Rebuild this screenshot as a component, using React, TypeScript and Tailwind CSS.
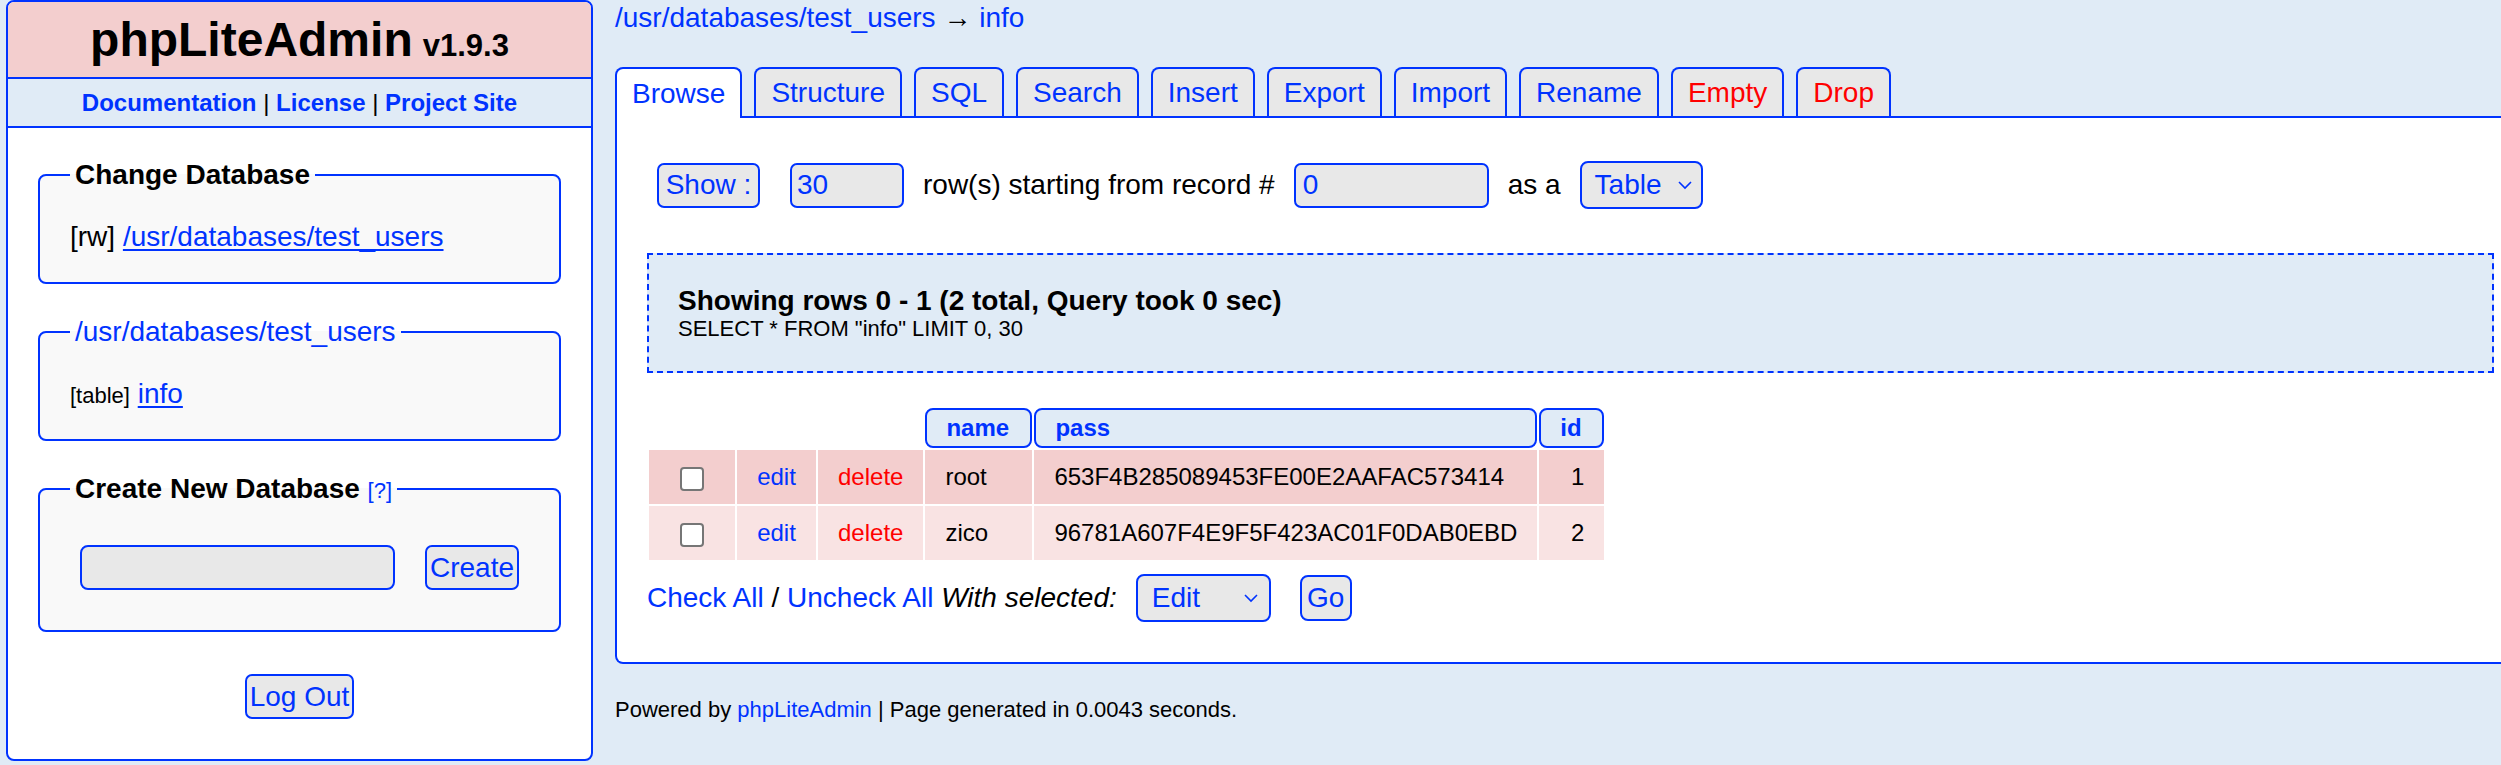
function Chevron() {
  return (
    <svg width="16" height="10" viewBox="0 0 16 10" fill="none">
      <polyline points="2,2 8,8 14,2" stroke="#0033ff" strokeWidth="1.6" />
    </svg>
  );
}

function Sidebar() {
  return (
    <aside className="ml-[6px] w-[587px] shrink-0 overflow-hidden rounded-[8px] border-2 border-[#0033ff] bg-white">
      <div className="h-[77px] border-b-2 border-[#0033ff] bg-[#f3cece] text-center font-bold leading-[75px]">
        <span className="text-[48px]">phpLiteAdmin</span>
        <span className="ml-[10px] text-[31px]">v1.9.3</span>
      </div>
      <div className="h-[49px] border-b-2 border-[#0033ff] bg-[#e0ebf6] text-center text-[24px] font-bold leading-[47px]">
        <span className="text-[#0033ff]">Documentation</span>
        <span className="font-normal"> | </span>
        <span className="text-[#0033ff]">License</span>
        <span className="font-normal"> | </span>
        <span className="text-[#0033ff]">Project Site</span>
      </div>

      <div className="px-[30px] pb-[40px] pt-[31px] text-[28px] leading-[32px]">
        <div className="flex flex-col gap-[32px]">
          <fieldset className="rounded-[8px] border-2 border-[#0033ff] bg-[#f9f9f9] px-[30px] pb-[29px] pt-[30px]">
            <legend className="px-[5px] font-bold">Change Database</legend>
            <div>
              [rw] <span className="text-[#0033ff] underline underline-offset-[3px]">/usr/databases/test_users</span>
            </div>
          </fieldset>

          <fieldset className="rounded-[8px] border-2 border-[#0033ff] bg-[#f9f9f9] px-[30px] pb-[29px] pt-[30px]">
            <legend className="px-[5px] text-[#0033ff]">/usr/databases/test_users</legend>
            <div>
              <span className="text-[22px] leading-none">[table]</span>{' '}
              <span className="text-[#0033ff] underline underline-offset-[3px]">info</span>
            </div>
          </fieldset>

          <fieldset className="rounded-[8px] border-2 border-[#0033ff] bg-[#f9f9f9] px-[30px] pb-[40px] pt-[40px]">
            <legend className="px-[5px]">
              <span className="font-bold">Create New Database</span>{' '}
              <span className="text-[22px] leading-none text-[#0033ff]">[?]</span>
            </legend>
            <div className="flex items-center">
              <div className="ml-[10px] h-[45px] w-[315px] rounded-[8px] border-2 border-[#0033ff] bg-[#e8e8e8]" />
              <button className="ml-[30px] flex h-[45px] w-[94px] items-center justify-center rounded-[7px] border-2 border-[#0033ff] bg-[#e8e8e8] text-[#0033ff]">
                Create
              </button>
            </div>
          </fieldset>
        </div>

        <div className="mt-[42px] flex justify-center">
          <button className="flex h-[45px] w-[109px] items-center justify-center rounded-[7px] border-2 border-[#0033ff] bg-[#e8e8e8] text-[#0033ff]">
            Log Out
          </button>
        </div>
      </div>
    </aside>
  );
}

export default function App() {
  const tabs = [
    { label: 'Structure', red: false },
    { label: 'SQL', red: false },
    { label: 'Search', red: false },
    { label: 'Insert', red: false },
    { label: 'Export', red: false },
    { label: 'Import', red: false },
    { label: 'Rename', red: false },
    { label: 'Empty', red: true },
    { label: 'Drop', red: true },
  ];

  const rows = [
    { name: 'root', pass: '653F4B285089453FE00E2AAFAC573414', id: 1, bg: 'bg-[#f3cece]' },
    { name: 'zico', pass: '96781A607F4E9F5F423AC01F0DAB0EBD', id: 2, bg: 'bg-[#f9e3e3]' },
  ];

  return (
    <div className="h-[765px] w-full overflow-hidden bg-[#e0ebf6] font-['Liberation_Sans',Arial,sans-serif] text-black">
      <div className="flex items-start">
        <Sidebar />

        <main className="ml-[22px] w-[1911px] shrink-0">
          <div className="pt-[2px] text-[28px] leading-[32px]">
            <span className="text-[#0033ff]">/usr/databases/test_users</span> →{' '}
            <span className="text-[#0033ff]">info</span>
          </div>

          {/* tab strip */}
          <div className="mt-[33px] flex items-end text-[28px]">
            <div className="flex h-[51px] items-center rounded-t-[8px] border-2 border-b-0 border-[#0033ff] bg-white px-[15px] text-[#0033ff]">
              Browse
            </div>
            <div className="flex flex-1 gap-[12px] border-b-2 border-[#0033ff] pl-[12px]">
              {tabs.map((t) => (
                <div
                  key={t.label}
                  className={
                    'flex h-[49px] items-center rounded-t-[8px] border-2 border-b-0 border-[#0033ff] bg-[#e8e8e8] px-[15px] ' +
                    (t.red ? 'text-[#ff0000]' : 'text-[#0033ff]')
                  }
                >
                  {t.label}
                </div>
              ))}
            </div>
          </div>

          <div className="rounded-bl-[8px] border-2 border-t-0 border-[#0033ff] bg-white px-[30px] pb-[40px] pt-[43px]">
            <div className="flex h-[48px] items-center text-[28px]">
              <button className="ml-[10px] flex h-[45px] w-[103px] items-center justify-center rounded-[7px] border-2 border-[#0033ff] bg-[#e8e8e8] text-[#0033ff]">
                Show :
              </button>
              <div className="ml-[30px] flex h-[45px] w-[114px] items-center rounded-[7px] border-2 border-[#0033ff] bg-[#e8e8e8] pl-[5px] text-[#0033ff]">
                30
              </div>
              <span className="ml-[19px]">row(s) starting from record #</span>
              <div className="ml-[19px] flex h-[45px] w-[195px] items-center rounded-[7px] border-2 border-[#0033ff] bg-[#e8e8e8] pl-[7px] text-[#0033ff]">
                0
              </div>
              <span className="ml-[19px]">as a</span>
              <div className="ml-[19px] flex h-[48px] w-[123px] items-center justify-between rounded-[8px] border-2 border-[#0033ff] bg-[#e8e8e8] pl-[13px] pr-[8px] text-[#0033ff]">
                Table
                <Chevron />
              </div>
            </div>

            <div className="mt-[44px] h-[120px] border-2 border-dashed border-[#0033ff] bg-[#e0ebf6] px-[29px] pt-[30px]">
              <div className="text-[28px] font-bold leading-[31px]">
                Showing rows 0 - 1 (2 total, Query took 0 sec)
              </div>
              <div className="text-[22px] leading-[25px]">SELECT * FROM "info" LIMIT 0, 30</div>
            </div>

            <table className="mt-[33px] border-separate border-spacing-[2px] text-[24px]">
              <thead>
                <tr>
                  <th colSpan={3} />
                  {['name', 'pass', 'id'].map((h) => (
                    <th
                      key={h}
                      className="h-[39px] rounded-[8px] border-2 border-[#0033ff] bg-[#e0ebf6] px-[19px] text-left font-bold text-[#0033ff]"
                    >
                      {h}
                    </th>
                  ))}
                </tr>
              </thead>
              <tbody>
                {rows.map((r) => (
                  <tr key={r.id}>
                    <td className={`h-[54px] w-[86px] text-center ${r.bg}`}>
                      <span className="inline-block h-[24px] w-[24px] rounded-[4px] border-2 border-[#767676] bg-white align-middle" />
                    </td>
                    <td className={`w-[79px] px-[20px] text-center text-[#0033ff] ${r.bg}`}>edit</td>
                    <td className={`w-[105px] px-[20px] text-center text-[#ff0000] ${r.bg}`}>delete</td>
                    <td className={`w-[107px] px-[20px] ${r.bg}`}>{r.name}</td>
                    <td className={`px-[20px] ${r.bg}`}>{r.pass}</td>
                    <td className={`w-[65px] px-[20px] text-right ${r.bg}`}>{r.id}</td>
                  </tr>
                ))}
              </tbody>
            </table>

            <div className="mt-[12px] flex h-[48px] items-center text-[28px]">
              <span className="text-[#0033ff]">Check All</span>
              <span className="whitespace-pre"> / </span>
              <span className="text-[#0033ff]">Uncheck All</span>
              <i className="whitespace-pre"> With selected:</i>
              <div className="ml-[19px] flex h-[48px] w-[135px] items-center justify-between rounded-[8px] border-2 border-[#0033ff] bg-[#e8e8e8] pl-[14px] pr-[10px] text-[#0033ff]">
                Edit
                <Chevron />
              </div>
              <button className="ml-[29px] flex h-[46px] w-[52px] items-center justify-center rounded-[8px] border-2 border-[#0033ff] bg-[#e8e8e8] text-[#0033ff]">
                Go
              </button>
            </div>
          </div>

          <div className="mt-[33px] text-[22px] leading-[25px]">
            Powered by <span className="text-[#0033ff]">phpLiteAdmin</span> | Page generated in 0.0043 seconds.
          </div>
        </main>
      </div>
    </div>
  );
}
